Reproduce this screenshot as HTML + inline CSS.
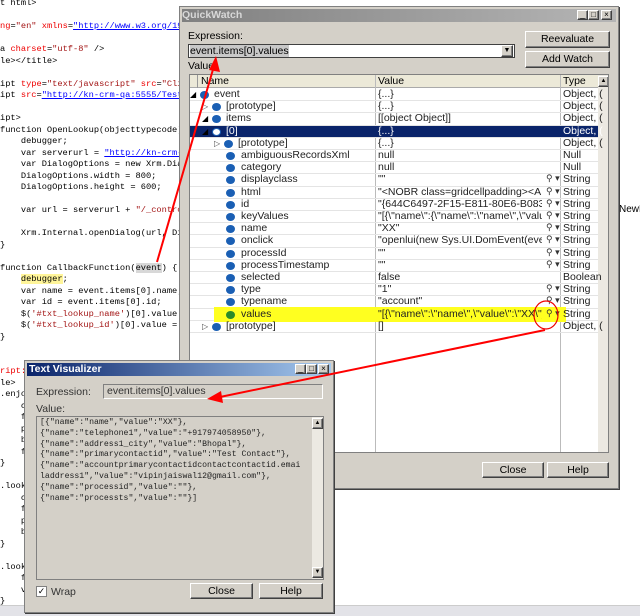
<!DOCTYPE html>
<html><head><meta charset="utf-8"><style>
*{margin:0;padding:0;box-sizing:border-box}
body{width:640px;height:616px;background:#fff;position:relative;overflow:hidden;font-family:"Liberation Sans",sans-serif;font-size:10.5px;color:#000}
.a{position:absolute;white-space:pre}
.code{font-family:"Liberation Mono",monospace;font-size:8.7px;line-height:11.5px}
.s{color:#a31515}.r{color:#e00}.u{color:#00f;text-decoration:underline}.k{color:#00f}
.btn{position:absolute;background:#d4d0c8;border:1px solid;border-color:#fff #404040 #404040 #fff;box-shadow:inset -1px -1px #808080;text-align:center;font-size:10.5px;line-height:14px}
.row{position:absolute;left:0;width:408px;height:12.2px;border-bottom:1px solid #e4e4e4}
.ic{position:absolute;width:9px;height:8px;border-radius:50%;background:#1a5fb4;top:2px}
.ex{position:absolute;top:1px;font-size:8px;color:#444}
.t{position:absolute;top:-1px}
.sb{position:absolute;background:#ece9e2}
</style></head><body>
<!-- code editor -->
<div class="a code" style="left:0;top:-2px">t html&gt;

<span class="r">ng</span>=<span class="s">"en"</span> <span class="r">xmlns</span>=<span class="u">"http://www.w3.org/19</span>

a <span class="r">charset</span>=<span class="s">"utf-8"</span> /&gt;
le&gt;&lt;/title&gt;

ipt <span class="r">type</span>=<span class="s">"text/javascript"</span> <span class="r">src</span>=<span class="s">"Cli</span>
ipt <span class="r">src</span>=<span class="u">"http://kn-crm-qa:5555/Test</span>

ipt&gt;
function OpenLookup(objecttypecode)
    debugger;
    var serverurl = <span class="u">"http://kn-crm-</span>
    var DialogOptions = new Xrm.Dia
    DialogOptions.width = 800;
    DialogOptions.height = 600;

    var url = serverurl + <span class="s">"/_contro</span>

    Xrm.Internal.openDialog(url, Di
}

function CallbackFunction(<span style="background:#d8d8d8">event</span>) {
    <span style="background:#fff59a">debugger</span>;
    var name = event.items[0].name;
    var id = event.items[0].id;
    $(<span class="s">'#txt_lookup_name'</span>)[0].value
    $(<span class="s">'#txt_lookup_id'</span>)[0].value =
}


<span class="r">ript:</span>
le&gt;
.enjo
    c
    f
    p
    b
    f
}

.look
    c
    f
    p
    b
}

.look
    f
    v
}</div>
<div class="a" style="left:0;top:605px;width:640px;height:11px;background:#e3e3e8;border-top:1px solid #ccc"></div>
<div class="a" style="left:619px;top:204px;font-size:10px">NewBu</div>

<!-- QuickWatch -->
<div class="a" style="left:179px;top:6px;width:440px;height:483px;background:#d4d0c8;border:1px solid #808080;box-shadow:1px 1px #404040">
 <div class="a" style="left:2px;top:2px;width:434px;height:13px;background:linear-gradient(90deg,#808080,#b5b5b5)"></div>
 <div class="a" style="left:2px;top:2px;color:#d8d8d8;font-weight:bold;font-size:10.5px">QuickWatch</div>
 <div class="btn" style="left:397px;top:3px;width:11px;height:10px;line-height:8px;font-size:8px">_</div>
 <div class="btn" style="left:408px;top:3px;width:11px;height:10px;line-height:8px;font-size:8px">□</div>
 <div class="btn" style="left:421px;top:3px;width:11px;height:10px;line-height:8px;font-size:8px">×</div>
 <div class="a" style="left:8px;top:23px">Expression:</div>
 <div class="a" style="left:8px;top:37px;width:327px;height:14px;background:#fff;border:1px solid #404040">
  <span class="a" style="left:1px;top:0;background:#c8c8c8">event.items[0].values</span>
  <div class="btn" style="left:312px;top:0;width:12px;height:12px;line-height:10px;font-size:7px">▼</div>
 </div>
 <div class="a" style="left:8px;top:53px">Value:</div>
 <div class="btn" style="left:345px;top:24px;width:85px;height:17px">Reevaluate</div>
 <div class="btn" style="left:345px;top:44px;width:85px;height:17px">Add Watch</div>
 <!-- grid -->
 <div class="a" style="left:9px;top:67px;width:420px;height:379px;background:#fff;border:1px solid #808080;overflow:hidden">
  <div class="a" style="left:0;top:0;width:420px;height:13px;background:#ece9d8;border-bottom:1px solid #aaa"></div>
  <div class="a" style="left:0;top:0;width:8px;height:13px;border-right:1px solid #999"></div>
  <div class="a" style="left:11px;top:0">Name</div>
  <div class="a" style="left:185px;top:0;height:378px;border-left:1px solid #bbb"></div>
  <div class="a" style="left:188px;top:0">Value</div>
  <div class="a" style="left:370px;top:0;height:378px;border-left:1px solid #bbb"></div>
  <div class="a" style="left:373px;top:0">Type</div>
  <div class="sb" style="left:408px;top:0;width:11px;height:378px"></div>
  <div class="btn" style="left:408px;top:1px;width:11px;height:11px;font-size:6px;line-height:9px">▲</div>
  <div id="rows" class="a" style="left:0;top:14px;width:408px"></div>
 </div>
 <div class="btn" style="left:302px;top:455px;width:62px;height:16px">Close</div>
 <div class="btn" style="left:367px;top:455px;width:62px;height:16px">Help</div>
</div>

<!-- Text Visualizer -->
<div class="a" style="left:24px;top:360px;width:310px;height:253px;background:#d4d0c8;border:1px solid #808080;box-shadow:1px 1px #404040">
 <div class="a" style="left:2px;top:2px;width:304px;height:13px;background:linear-gradient(90deg,#0a246a,#a6caf0)"></div>
 <div class="a" style="left:4px;top:2px;color:#fff;font-weight:bold;font-size:10.5px">Text Visualizer</div>
 <div class="btn" style="left:270px;top:3px;width:11px;height:10px;line-height:8px;font-size:8px">_</div>
 <div class="btn" style="left:281px;top:3px;width:11px;height:10px;line-height:8px;font-size:8px">□</div>
 <div class="btn" style="left:293px;top:3px;width:11px;height:10px;line-height:8px;font-size:8px">×</div>
 <div class="a" style="left:11px;top:25px;color:#333">Expression:</div>
 <div class="a" style="left:78px;top:23px;width:220px;height:15px;border:1px solid;border-color:#808080 #fff #fff #808080;color:#333;padding-left:3px">event.items[0].values</div>
 <div class="a" style="left:11px;top:42px;color:#333">Value:</div>
 <div class="a" style="left:11px;top:55px;width:288px;height:164px;border:1px solid #808080;background:#d4d0c8">
  <div class="a code" style="left:3px;top:1px;font-size:8.2px;line-height:10.8px;color:#222">[{"name":"name","value":"XX"},
{"name":"telephone1","value":"+917974058950"},
{"name":"address1_city","value":"Bhopal"},
{"name":"primarycontactid","value":"Test Contact"},
{"name":"accountprimarycontactidcontactcontactid.emai
laddress1","value":"vipinjaiswal12@gmail.com"},
{"name":"processid","value":""},
{"name":"processts","value":""}]</div>
  <div class="sb" style="left:275px;top:0;width:11px;height:162px"></div>
  <div class="btn" style="left:275px;top:1px;width:11px;height:11px;font-size:6px;line-height:9px">▲</div>
  <div class="btn" style="left:275px;top:150px;width:11px;height:11px;font-size:6px;line-height:9px">▼</div>
 </div>
 <div class="a" style="left:11px;top:225px;width:11px;height:11px;background:#fff;border:1px solid #808080;font-size:9px;line-height:9px;text-align:center">✓</div>
 <div class="a" style="left:26px;top:225px;color:#333">Wrap</div>
 <div class="btn" style="left:165px;top:222px;width:63px;height:16px">Close</div>
 <div class="btn" style="left:234px;top:222px;width:64px;height:16px">Help</div>
</div>

<!-- red annotations -->
<svg class="a" style="left:0;top:0" width="640" height="616">
 <line x1="157" y1="262" x2="214" y2="66" stroke="#f00" stroke-width="2"/>
 <polygon points="216,56 209,70 220,72" fill="#f00"/>
 <line x1="545" y1="330" x2="220" y2="397" stroke="#f00" stroke-width="2"/>
 <polygon points="207,399 221,391 223,403" fill="#f00"/>
 <ellipse cx="546" cy="315" rx="12" ry="14" fill="none" stroke="#e00" stroke-width="1.2"/>
</svg>

<script>
var R=[
[0,'event','{...}','Object, (',1],
[1,'[prototype]','{...}','Object, (',2],
[1,'items','[[object Object]]','Object, (',1],
[2,'[0]','{...}','Object, (',1],
[3,'[prototype]','{...}','Object, (',2],
[4,'ambiguousRecordsXml','null','Null',0],
[4,'category','null','Null',0],
[4,'displayclass','""','String',0,1],
[4,'html','"<NOBR class=gridcellpadding><A tabInd','String',0,1],
[4,'id','"{644C6497-2F15-E811-80E6-B083FEAB90EC','String',0,1],
[4,'keyValues','"[{\\"name\\":{\\"name\\":\\"name\\",\\"value\\":\\\'','String',0,1],
[4,'name','"XX"','String',0,1],
[4,'onclick','"openlui(new Sys.UI.DomEvent(event));"','String',0,1],
[4,'processId','""','String',0,1],
[4,'processTimestamp','""','String',0,1],
[4,'selected','false','Boolean',0],
[4,'type','"1"','String',0,1],
[4,'typename','"account"','String',0,1],
[4,'values','"[{\\"name\\":\\"name\\",\\"value\\":\\"XX\\"},{\\"','String',0,1],
[2,'[prototype]','[]','Object, (',2]];
var h='';
R.forEach(function(r,i){
 var lvl=r[0],x=[12,24,24,36,48][lvl];
 var sel=i==3,yel=i==18;
 var st='top:'+(i*12.2)+'px;';
 if(sel)st+='background:#0a246a;color:#fff;';
 h+='<div class="row" style="'+st+'">';
 if(yel)h+='<div class="a" style="left:24px;top:-2px;width:352px;height:15px;background:#ffff20"></div>';
 if(r[4]==1)h+='<span class="ex" style="left:'+(x-12)+'px;color:#000">◢</span>';
 if(r[4]==2)h+='<span class="ex" style="left:'+(x-12)+'px">▷</span>';
 h+='<div class="ic" style="left:'+(lvl==4?x-12:x-2)+'px;'+(sel?'background:#fff;border:1px solid #1a5fb4':'')+(yel?'background:#2a8a2a':'')+'"></div>';
 var tx=(lvl==4?x+3:x+12);
 h+='<span class="t" style="left:'+tx+'px;color:'+(sel?'#fff':'#222')+'">'+r[1]+'</span>';
 h+='<span class="t" style="left:188px;width:'+(r[5]?164:180)+'px;overflow:hidden;color:'+(sel?'#fff':'#222')+'">'+r[2].replace(/</g,'&lt;')+'</span>';
 if(r[5])h+='<span class="t" style="left:356px;font-size:9px;color:#333">⚲ ▾</span>';
 h+='<span class="t" style="left:373px;color:'+(sel?'#fff':'#222')+'">'+r[3]+'</span>';
 h+='</div>';
});
document.getElementById('rows').innerHTML=h;
</script>
</body></html>
